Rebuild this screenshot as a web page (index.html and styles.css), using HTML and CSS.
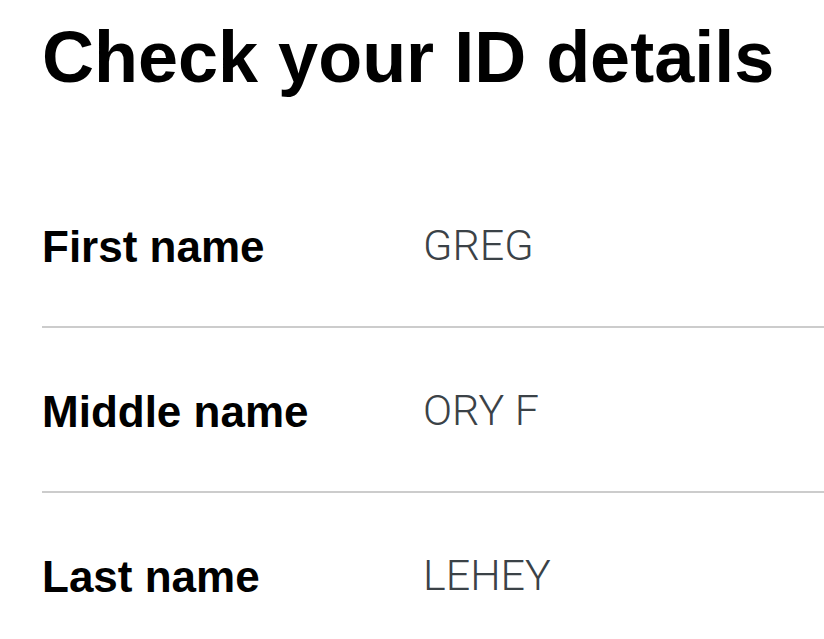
FILE: index.html
```html
<!DOCTYPE html>
<html lang="en">
<head>
  <meta charset="UTF-8">
  <title>Check your ID details</title>
  <link rel="stylesheet" href="styles.css">
</head>
<body>

  <div class="page">
    <h1>Check your ID details</h1>

    <div class="details">
      <div class="row">
        <div class="label">First name</div>
        <div class="value">GREG</div>
      </div>
      <div class="row">
        <div class="label">Middle name</div>
        <div class="value">ORY F</div>
      </div>
      <div class="row">
        <div class="label">Last name</div>
        <div class="value">LEHEY</div>
      </div>
    </div>
  </div>

</body>
</html>
```

FILE: styles.css
```css
body {
  font-family: 'Liberation Sans', Arial, sans-serif;
  background-color: #ffffff;
  color: #000;
  margin: 0;
  padding: 0;
}

.page {
  padding-left: 42px;
}

h1 {
  font-size: 72px;
  font-weight: 700;
  line-height: normal;
  margin: 16px 0 65px;
}

.row {
  display: grid;
  grid-template-columns: 381px 1fr;
  align-items: center;
  height: 163px;
  border-bottom: 2px solid #cccccc;
}

.label {
  font-size: 44px;
  font-weight: 700;
  padding-top: 4px;
}

.value {
  font-family: Roboto, 'Noto Sans', sans-serif;
  font-size: 43px;
  font-weight: 300;
  color: #3b4247;
}
```
